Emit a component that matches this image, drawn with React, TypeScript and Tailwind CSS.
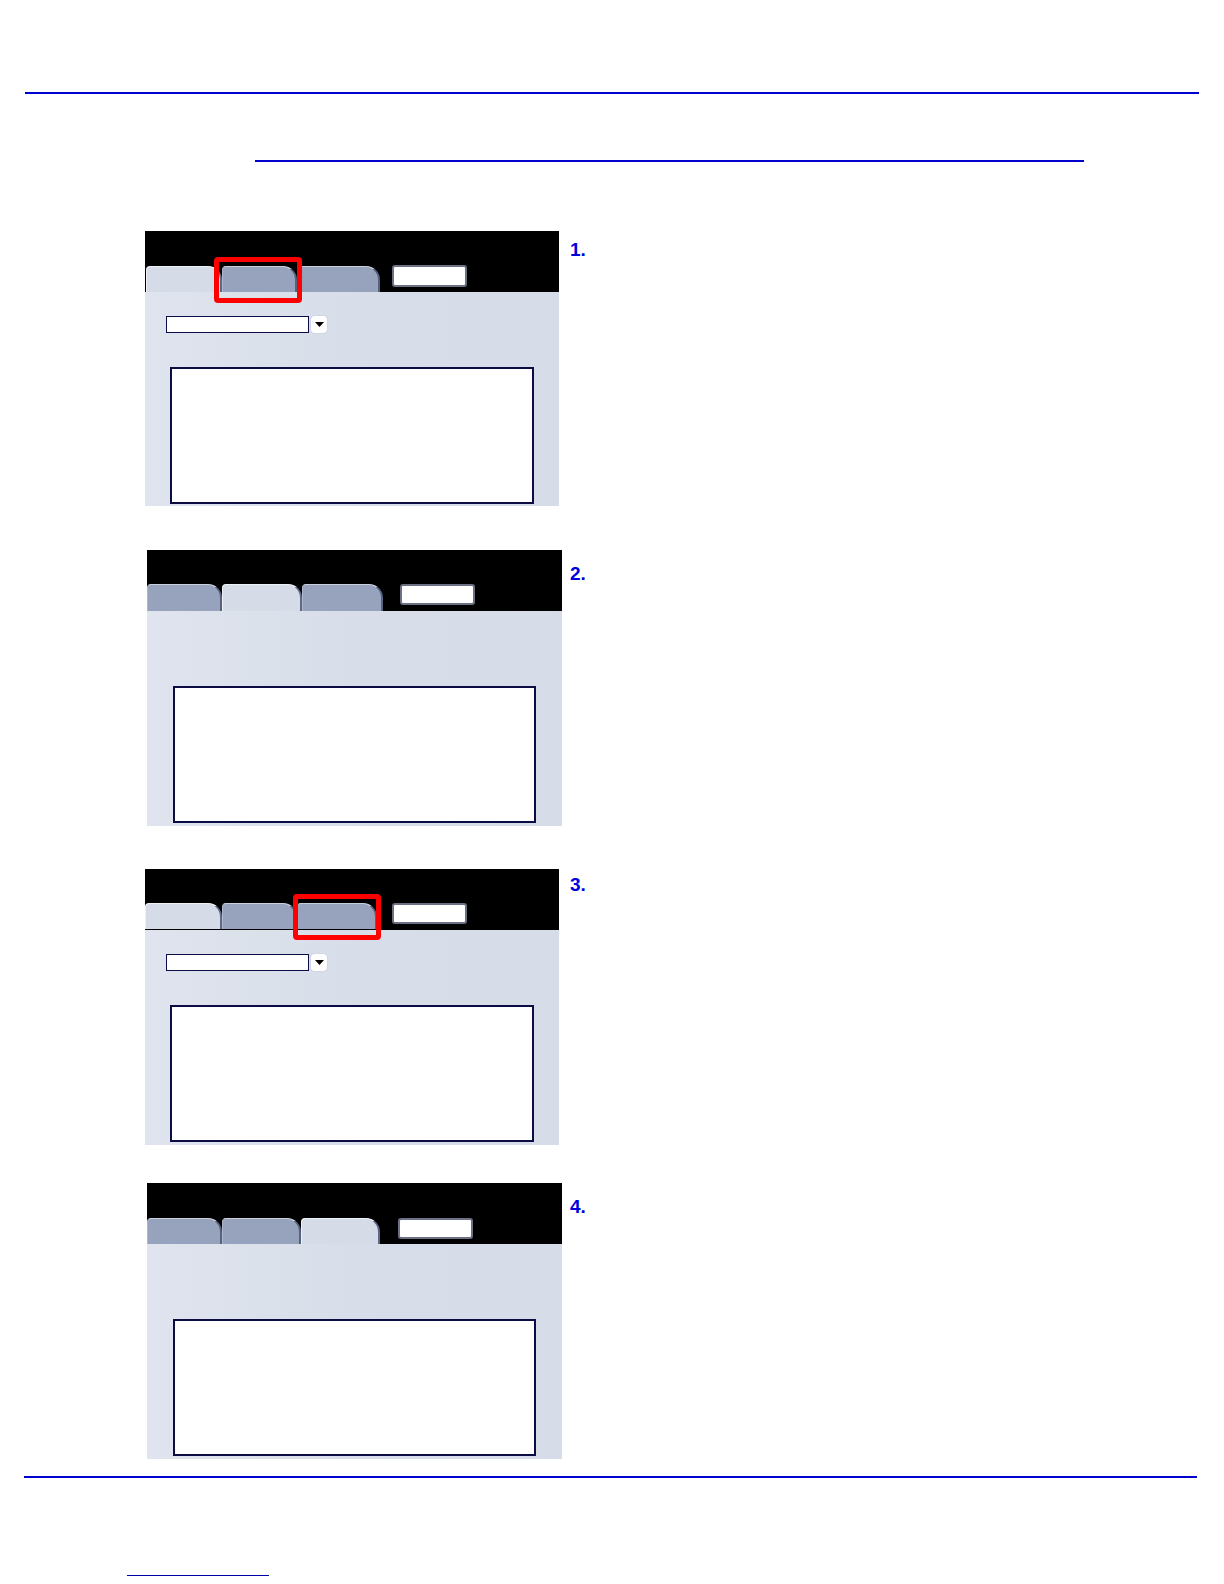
import React from "react";

type PanelCfg = {
  row: string;
  panel: string;
  label: string;
  num: string;
  tabs: string[];
  active: number;
  btn: string;
  tabTop: string;
  boxMx: string;
  dropdown: boolean;
  highlight?: string;
};

const panels: PanelCfg[] = [
  {
    row: "mt-[69px] h-[275px]",
    panel: "ml-[145px] w-[414px] h-[275px]",
    label: "ml-[11px] mt-[9px]",
    num: "1.",
    tabs: ["w-[76px] ml-[1px]", "w-[75px]", "w-[83px]"],
    active: 0,
    btn: "ml-[12px] w-[75px] mt-[34px] h-[22px]",
    tabTop: "mt-[35px] h-[26px]",
    boxMx: "mx-[25px]",
    dropdown: true,
    highlight: "left-[69px] top-[26px]",
  },
  {
    row: "mt-[44px] h-[276px]",
    panel: "ml-[147px] w-[415px] h-[276px]",
    label: "ml-[8px] mt-[14px]",
    num: "2.",
    tabs: ["w-[75px]", "w-[80px]", "w-[81px]"],
    active: 1,
    btn: "ml-[17px] w-[75px] mt-[34px] h-[21px]",
    tabTop: "mt-[34px] h-[27px]",
    boxMx: "mx-[26px]",
    dropdown: false,
  },
  {
    row: "mt-[43px] h-[276px]",
    panel: "ml-[145px] w-[414px] h-[276px]",
    label: "ml-[11px] mt-[6px]",
    num: "3.",
    tabs: ["w-[77px]", "w-[75px]", "w-[80px]"],
    active: 0,
    btn: "ml-[15px] w-[75px] mt-[34px] h-[21px]",
    tabTop: "mt-[34px] h-[26px]",
    boxMx: "mx-[25px]",
    dropdown: true,
    highlight: "left-[148px] top-[25px]",
  },
  {
    row: "mt-[38px] h-[276px]",
    panel: "ml-[147px] w-[415px] h-[276px]",
    label: "ml-[8px] mt-[14px]",
    num: "4.",
    tabs: ["w-[75px]", "w-[79px]", "w-[79px]"],
    active: 2,
    btn: "ml-[18px] w-[75px] mt-[35px] h-[21px]",
    tabTop: "mt-[35px] h-[26px]",
    boxMx: "mx-[26px]",
    dropdown: false,
  },
];

function Tab({ cls, active, top }: { cls: string; active: boolean; top: string }) {
  if (active) {
    return (
      <div
        className={`${cls} ${top} relative z-10 rounded-tl-[4px] rounded-tr-[14px] bg-[#d6dce7] border-t border-l border-r-2 border-t-[#eef1f6] border-l-[#eef1f6] border-r-[#5d6987]`}
      />
    );
  }
  return (
    <div
      className={`${cls} ${top} relative rounded-tl-[4px] rounded-tr-[14px] bg-[#97a2bd] border-t border-l border-r-2 border-t-[#c9cfdd] border-l-[#aeb7cc] border-r-[#56627f]`}
    />
  );
}

function Panel({ cfg }: { cfg: PanelCfg }) {
  return (
    <div className={`${cfg.row} flex items-start`}>
      <div className={`${cfg.panel} relative flex flex-col bg-[#d8dee9] shrink-0`}>
        <div className="h-[61px] bg-black flex items-start shrink-0">
          {cfg.tabs.map((t, i) => (
            <Tab key={i} cls={t} active={i === cfg.active} top={cfg.tabTop} />
          ))}
          <div className={`${cfg.btn} bg-white rounded-[3px] border-2 border-[#6b7183]`} />
        </div>
        <div className="flex-1 flex flex-col bg-gradient-to-r from-[#dfe4ee] via-[#d8dee9] to-[#d6dce8]">
          <div className="h-[75px] pt-[24px] pl-[21px] flex items-start">
            {cfg.dropdown && (
              <div className="flex items-center gap-[2px]">
                <div className="w-[143px] h-[17px] bg-white border-[1.5px] border-[#0b0b45]" />
                <div className="w-[16px] h-[17px] bg-white rounded-[3px] shadow-[0_0_1px_#8891a8] flex items-center justify-center">
                  <svg width="9" height="5" viewBox="0 0 9 5">
                    <path d="M0 0 L9 0 L4.5 5 Z" fill="#000" />
                  </svg>
                </div>
              </div>
            )}
          </div>
          <div className={`${cfg.boxMx} h-[137px] bg-white border-2 border-[#0c0c44]`} />
        </div>
        {cfg.highlight && (
          <div
            className={`absolute ${cfg.highlight} w-[88px] h-[46px] border-[5px] border-[#ff0000] rounded-[4px] z-20`}
          />
        )}
      </div>
      <div
        className={`${cfg.label} text-[19px] leading-[19px] font-bold text-[#0000dd]`}
        style={{ fontFamily: '"Liberation Sans", Arial, sans-serif' }}
      >
        {cfg.num}
      </div>
    </div>
  );
}

export default function App() {
  return (
    <div className="w-[1224px] h-[1584px] bg-white overflow-hidden flex flex-col">
      <div className="mt-[92px] ml-[25px] w-[1174px] h-[2px] bg-[#0000cc]" />
      <div className="mt-[66px] ml-[255px] w-[829px] h-[2px] bg-[#0000cc]" />
      {panels.map((p) => (
        <Panel key={p.num} cfg={p} />
      ))}
      <div className="mt-[17px] ml-[24px] w-[1173px] h-[2px] bg-[#0000cc]" />
      <div className="mt-[97px] ml-[127px] w-[142px] h-px bg-[#0000aa]" />
    </div>
  );
}
